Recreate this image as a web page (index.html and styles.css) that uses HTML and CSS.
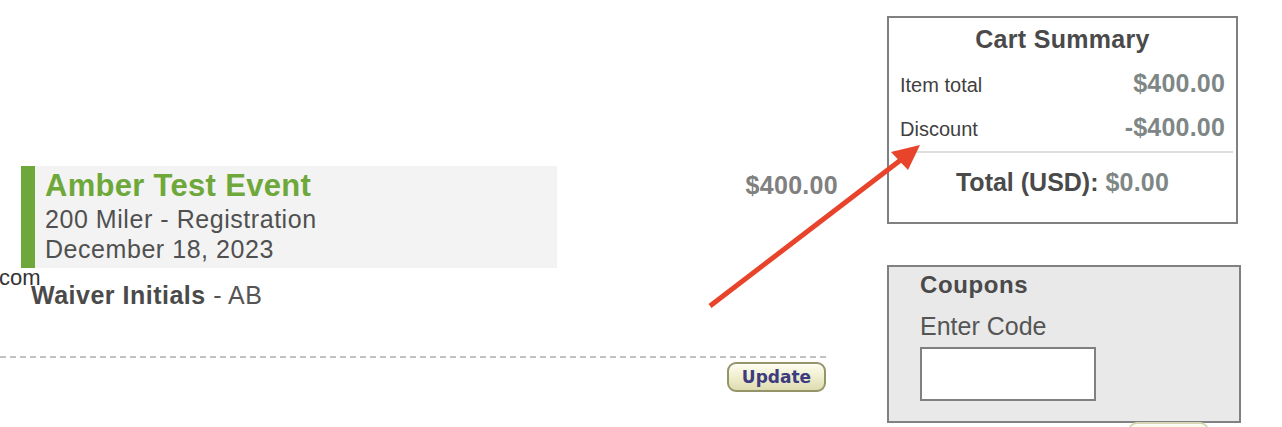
FILE: index.html
```html
<!DOCTYPE html>
<html>
<head>
	<title>Cart</title>
	<link rel="stylesheet" href="styles.css">
</head>
<body>
<div class="page">
  <div class="cart-main">
    <div class="line-item">
      <div class="item-info">
        <div class="item-title">Amber Test Event</div>
        <div class="item-line">200 Miler - Registration</div>
        <div class="item-line">December 18, 2023</div>
      </div>
      <div class="item-price">$400.00</div>
    </div>
    <div class="email">com</div>
    <div class="waiver"><b>Waiver Initials</b> - AB</div>
    <div class="divider"></div>
    <div class="actions">
      <button class="btn">Update</button>
    </div>
  </div>

  <div class="sidebar">
    <div class="summary">
      <h2>Cart Summary</h2>
      <div class="sum-row">
        <span class="label">Item total</span>
        <span class="amount">$400.00</span>
      </div>
      <div class="sum-row">
        <span class="label">Discount</span>
        <span class="amount">-$400.00</span>
      </div>
      <div class="sum-rule"></div>
      <div class="sum-total">Total (USD): <span class="amount">$0.00</span></div>
    </div>

    <div class="coupons">
      <h3>Coupons</h3>
      <label for="code">Enter Code</label>
      <input type="text" id="code">
    </div>
    <button class="btn btn-apply" aria-label="Apply"></button>
  </div>
</div>

<svg class="annotation" width="1282" height="427" viewBox="0 0 1282 427">
  <line x1="710" y1="306" x2="902" y2="159" stroke="#e8432b" stroke-width="5"/>
  <polygon points="920,145 891,152 908,170" fill="#e8432b"/>
</svg>
</body>
</html>
```

FILE: styles.css
```css
html {
  box-sizing: border-box;
}
*,
*:before,
*:after {
  box-sizing: inherit;
}
body {
  margin: 0;
  width: 1282px;
  height: 427px;
  overflow: hidden;
  background: #fff;
  font-family: "Liberation Sans", Arial, sans-serif;
  color: #555;
  position: relative;
}
.page {
  display: flex;
  align-items: flex-start;
}

/* left column */
.cart-main {
  width: 838px;
  padding-top: 166px;
}
.line-item {
  display: flex;
  align-items: flex-start;
}
.item-info {
  margin-left: 21px;
  width: 536px;
  padding: 2px 0 4px 10px;
  background-color: #f3f3f3;
  border-left: 14px solid #6ea83a;
}
.item-title {
  font-size: 31px;
  line-height: 36px;
  font-weight: bold;
  color: #6ea83a;
  letter-spacing: 0.3px;
}
.item-line {
  font-size: 25px;
  line-height: 30px;
  color: #505050;
  letter-spacing: 0.55px;
}
.item-price {
  margin-left: auto;
  margin-top: 4px;
  font-size: 25px;
  line-height: 30px;
  font-weight: bold;
  color: #808080;
  letter-spacing: 0.3px;
}
.email {
  height: 14px;
  margin-top: -1px;
  margin-left: -1px;
  font-size: 22px;
  line-height: 22px;
  color: #333;
}
.waiver {
  padding-left: 31px;
  font-size: 25px;
  line-height: 28px;
  color: #555;
  letter-spacing: 0.5px;
}
.waiver b {
  color: #4a4a4a;
}
.divider {
  width: 826px;
  height: 2px;
  margin-top: 47px;
  background: repeating-linear-gradient(90deg, #c2c2c2 0 6px, transparent 6px 10px);
}
.actions {
  width: 826px;
  display: flex;
  justify-content: flex-end;
  margin-top: 4px;
}
.btn {
  width: 99px;
  height: 30px;
  padding: 0;
  border: 2px solid #94946a;
  border-radius: 9px;
  background: linear-gradient(#fdfdee, #ecebc8 60%, #dcdbb0);
  box-shadow: inset 0 1px 0 #fff;
  font-family: "DejaVu Sans", Verdana, sans-serif;
  font-size: 17px;
  font-weight: bold;
  color: #3c3c7e;
}

/* right column */
.sidebar {
  margin-left: 49px;
  padding-top: 16px;
  display: flex;
  flex-direction: column;
  align-items: flex-start;
}
.summary {
  width: 351px;
  border: 2px solid #808080;
  padding: 6px 0 25px;
}
.summary h2 {
  margin: 0;
  text-align: center;
  font-size: 25px;
  line-height: 30px;
  color: #4a4a4a;
  letter-spacing: 0.3px;
}
.sum-row {
  display: flex;
  justify-content: space-between;
  align-items: baseline;
  padding: 0 11px;
  margin-top: 14px;
  line-height: 30px;
}
.sum-row + .sum-row {
  margin-top: 12px;
}
.label {
  font-size: 20px;
  color: #3f3f3f;
}
.amount {
  font-size: 25px;
  font-weight: bold;
  color: #7e8786;
  letter-spacing: 0.2px;
}
.sum-rule {
  height: 2px;
  margin: 7px 3px 0 4px;
  background-color: #dedede;
}
.sum-total {
  margin-top: 14px;
  text-align: center;
  font-size: 25px;
  line-height: 30px;
  font-weight: bold;
  color: #4a4a4a;
}
.coupons {
  width: 354px;
  margin-top: 41px;
  padding: 3px 0 20px 31px;
  background-color: #e9e9e9;
  border: 2px solid #808080;
  display: flex;
  flex-direction: column;
  align-items: flex-start;
}
.coupons h3 {
  margin: 0;
  font-size: 24px;
  line-height: 30px;
  color: #4a4a4a;
  letter-spacing: 0.6px;
}
.coupons label {
  margin-top: 11px;
  font-size: 25px;
  line-height: 30px;
  color: #555;
}
.coupons input {
  width: 176px;
  height: 54px;
  margin-top: 6px;
  border: 2px solid #808080;
  background: #fff;
}
.btn-apply {
  width: 81px;
  margin-left: 241px;
  margin-top: -1px;
  border-color: #d6d6b4;
}

.annotation {
  position: absolute;
  top: 0;
  left: 0;
  pointer-events: none;
}
```
